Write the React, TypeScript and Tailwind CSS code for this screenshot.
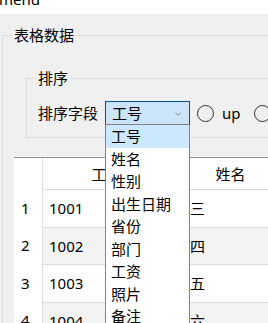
import { ChevronDown } from 'lucide-react';

const fields = ['工号', '姓名', '性别', '出生日期', '省份', '部门', '工资', '照片', '备注'];

const rows = [
  { no: 1, id: '1001', name: '张三' },
  { no: 2, id: '1002', name: '李四' },
  { no: 3, id: '1003', name: '王五' },
  { no: 4, id: '1004', name: '赵六' },
];

function Radio({ label }: { label?: string }) {
  return (
    <div className="flex items-center shrink-0">
      <span className="w-[17px] h-[17px] rounded-full border border-[#333333] shrink-0" />
      {label && <span className="ml-[8px] leading-[18px]">{label}</span>}
    </div>
  );
}

export default function App() {
  return (
    <div className="relative w-[268px] h-[323px] overflow-hidden bg-[#f0f0f0] text-[15px] text-black font-['Noto_Sans','Noto_Sans_CJK_SC',sans-serif]">
      {/* Menu strip, cut off at the top */}
      <div className="h-[14px] bg-white overflow-hidden">
        <div className="-mt-[10px] -ml-[1px] leading-[18px]">menu</div>
      </div>

      {/* Outer group: 表格数据 */}
      <fieldset className="ml-[2px] mt-[14px] w-[400px] h-[400px] border border-[#dcdcdc]">
        <legend className="ml-[9px] px-[2px] leading-[15px]">表格数据</legend>

        {/* Inner group: 排序 */}
        <fieldset className="ml-[23px] mt-[28px] w-[400px] pb-[12px] border border-[#dcdcdc]">
          <legend className="ml-[9px] px-[2px] leading-[15px]">排序</legend>
          <div className="mt-[15px] pl-[11px] flex items-center h-[24px]">
            <span className="leading-[18px] shrink-0">排序字段</span>
            <div className="relative ml-[7px] w-[85px] h-[24px] shrink-0 border border-[#005499] bg-[#cce4f7] flex items-center pl-[6px]">
              <span className="leading-[18px]">工号</span>
              <ChevronDown className="absolute right-[6px] top-[7px] w-[10px] h-[10px] text-[#555555]" strokeWidth={1.5} />

              {/* Open dropdown list */}
              <div className="absolute z-10 left-[-1px] top-full w-[85px] h-[240px] border border-[#828282] bg-white">
                {fields.map((f, i) => (
                  <div
                    key={f}
                    className={`h-[22.5px] flex items-center pl-[5px] leading-[18px] ${i === 0 ? 'bg-[#cce8ff]' : ''}`}
                  >
                    {f}
                  </div>
                ))}
              </div>
            </div>
            <div className="ml-[7px]">
              <Radio label="up" />
            </div>
            <div className="ml-[13px]">
              <Radio label="down" />
            </div>
          </div>
        </fieldset>

        {/* Table */}
        <div className="ml-[11px] mt-[19px] w-[400px] bg-white border-t border-[#939393]">
          <div className="flex h-[31px]">
            <div className="w-[29px] border-r border-[#e0e0e0]" />
            <div className="w-[127px] flex items-center justify-center leading-[18px]">工号</div>
            <div className="w-[120px] border-l border-[#e0e0e0] flex items-center justify-center leading-[18px]">姓名</div>
          </div>
          {rows.map((r, i) => (
            <div key={r.no} className="flex h-[37.5px]">
              <div className="w-[29px] pl-[7px] flex items-center border-r border-[#e0e0e0] leading-[18px]">{r.no}</div>
              <div className={`flex flex-1 border-t border-[#d9d9d9] ${i % 2 === 1 ? 'bg-[#f3f3f3]' : 'bg-white'}`}>
                <div className="w-[127px] pl-[6px] flex items-center leading-[18px]">{r.id}</div>
                <div className="w-[120px] pl-[5px] flex items-center leading-[18px]">{r.name}</div>
              </div>
            </div>
          ))}
        </div>
      </fieldset>
    </div>
  );
}
